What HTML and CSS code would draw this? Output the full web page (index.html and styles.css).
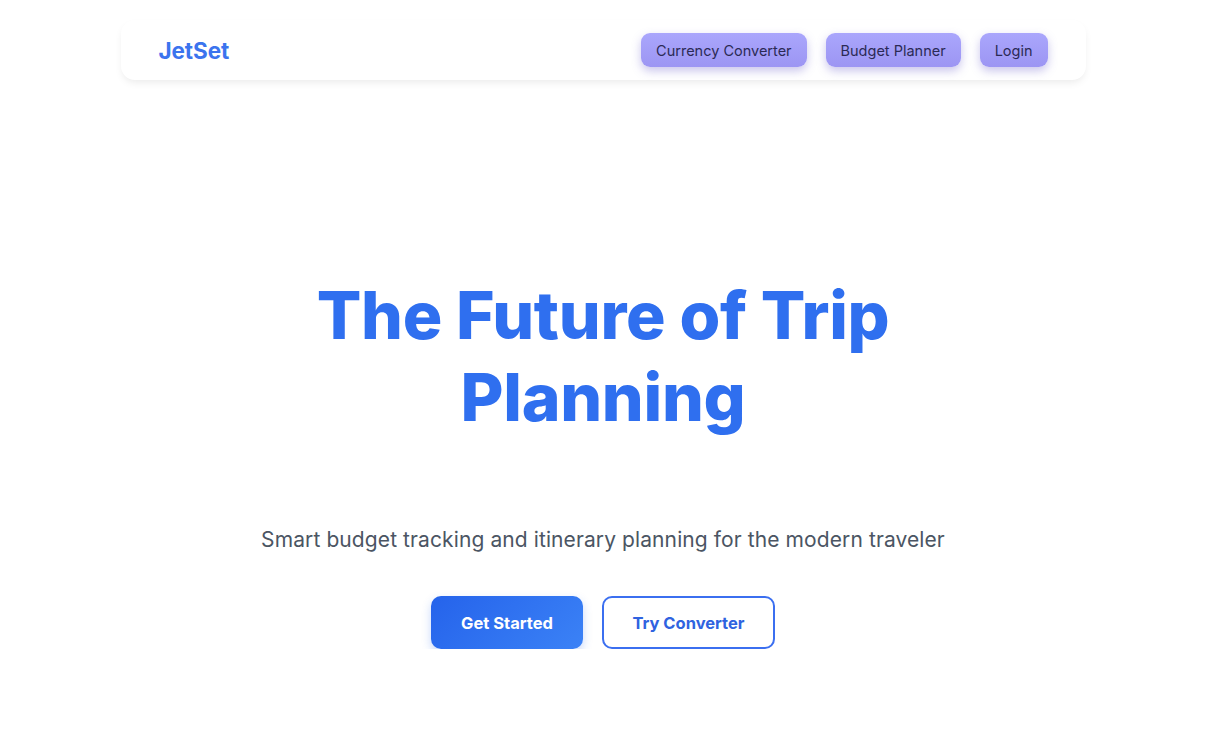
FILE: index.html
```html
<!DOCTYPE html>
<html lang="en">
<head>
<meta charset="utf-8">
<title>JetSet</title>
<link rel="stylesheet" href="styles.css">
</head>
<body>
<header class="nav">
  <a class="logo" href="#">JetSet</a>
  <nav class="nav-links">
    <a class="nav-btn" href="#">Currency Converter</a>
    <a class="nav-btn" href="#">Budget Planner</a>
    <a class="nav-btn" href="#">Login</a>
  </nav>
</header>
<main class="hero">
  <h1 class="title">The Future of Trip<br>Planning</h1>
  <p class="subtitle">Smart budget tracking and itinerary planning for the modern traveler</p>
  <div class="actions">
    <a class="btn btn-primary" href="#">Get Started</a>
    <a class="btn btn-outline" href="#">Try Converter</a>
  </div>
</main>
</body>
</html>
```
FILE: styles.css
```css
* { box-sizing: border-box; }
html, body { margin: 0; padding: 0; background: #fff; }
body {
  font-family: Inter, "Noto Sans", sans-serif;
  color: #1f2937;
  padding-top: 20px;
}
a { text-decoration: none; }
.nav {
  width: 965px;
  height: 60px;
  margin: 0 auto;
  background: #fff;
  border-radius: 14px;
  box-shadow: 0 4px 8px -2px rgba(0,0,0,0.09);
  display: flex;
  align-items: center;
  justify-content: space-between;
  padding: 0 38px 0 38px;
}
.logo {
  font-weight: 700;
  font-size: 22.5px;
  color: #3b74ee;
  letter-spacing: -0.1px;
}
.nav-links { display: flex; gap: 19px; }
.nav-btn {
  height: 34px;
  display: flex;
  align-items: center;
  padding: 0 15px;
  border-radius: 9px;
  background: linear-gradient(180deg, #aaa6fc 0%, #9c95f3 100%);
  color: #2b2a55;
  font-size: 14.5px;
  box-shadow: 0 4px 10px rgba(100, 90, 200, 0.35);
}
.hero {
  display: flex;
  flex-direction: column;
  align-items: center;
  text-align: center;
  padding-top: 194px;
}
.title {
  margin: 0;
  font-size: 66px;
  line-height: 82px;
  font-weight: 800;
  letter-spacing: -0.3px;
  color: #2f6fef;
}
.subtitle {
  margin: 88px 0 0;
  font-size: 21px;
  line-height: 28px;
  letter-spacing: 0.1px;
  color: #4b5563;
}
.actions {
  display: flex;
  gap: 19px;
  margin-top: 42px;
}
.btn {
  height: 53px;
  display: flex;
  align-items: center;
  justify-content: center;
  border-radius: 10px;
  font-weight: 700;
  font-size: 16.5px;
}
.btn-primary {
  width: 152px;
  color: #fff;
  background: linear-gradient(135deg, #2563eb 0%, #3b82f6 100%);
  box-shadow: 0 4px 10px rgba(37, 99, 235, 0.25);
}
.btn-outline {
  width: 173px;
  color: #2f63e0;
  background: #fff;
  border: 2px solid #3b6ff0;
}
```
